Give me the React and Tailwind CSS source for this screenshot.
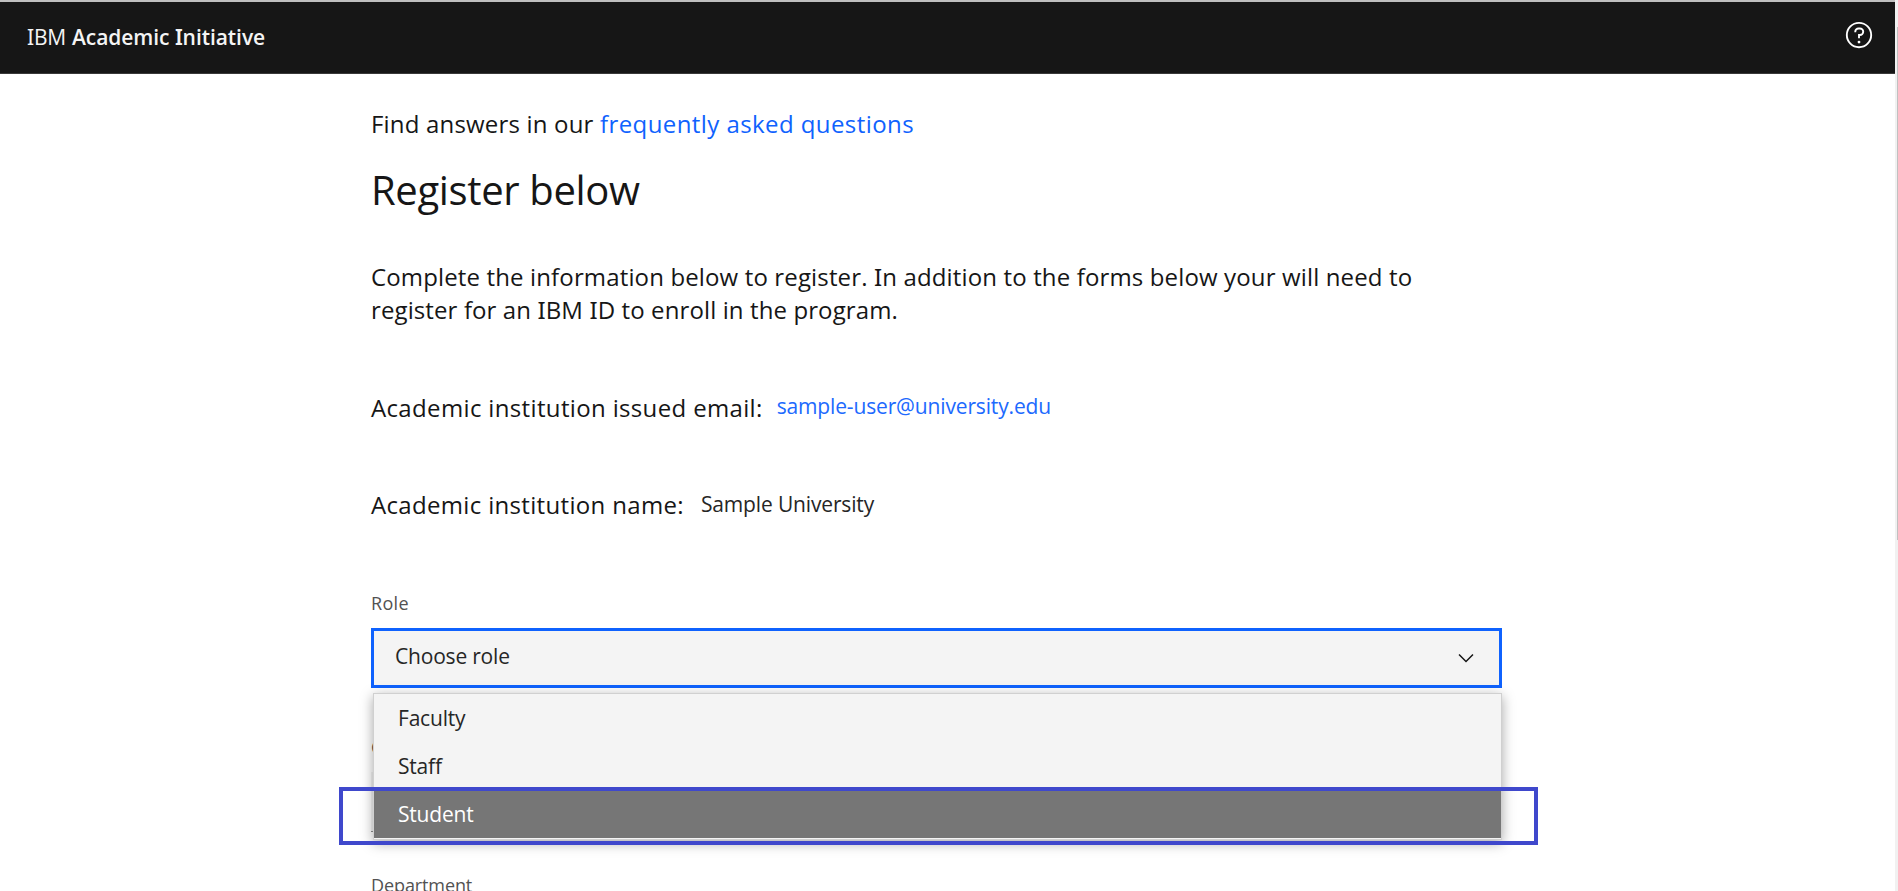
import React from 'react'

function SlabI() {
  return <span className="font-['Noto_Sans']">I</span>
}

function HelpIcon() {
  return (
    <svg viewBox="0 0 32 32" className="size-[30px] fill-white">
      <path d="M16 2a14 14 0 1 0 14 14A14 14 0 0 0 16 2Zm0 26a12 12 0 1 1 12-12A12 12 0 0 1 16 28Z" />
      <circle cx="16" cy="23.5" r="1.5" />
      <path d="M17 8h-1.5A4.49 4.49 0 0 0 11 12.5V13h2v-.5A2.5 2.5 0 0 1 15.5 10H17a2.5 2.5 0 0 1 0 5h-2v4.5h2V17a4.5 4.5 0 0 0 0-9Z" />
    </svg>
  )
}

function Chevron() {
  return (
    <svg viewBox="0 0 16 16" className="size-6 fill-[#161616]">
      <path d="M8 11 3 6l.7-.7L8 9.6l4.3-4.3.7.7Z" />
    </svg>
  )
}

function RoleMenu() {
  return (
    <ul className="absolute top-[65px] left-[2px] z-10 h-[147px] w-[1129px] border border-[#d0d0d0] bg-[#f4f4f4] text-[21px] tracking-[-0.2px] text-[#262626] shadow-[0_3px_12px_rgba(0,0,0,0.35)]">
      <li className="flex h-12 items-center pl-6">Faculty</li>
      <li className="flex h-12 items-center pl-6">Staff</li>
      <li className="flex h-12 items-center bg-[#767676] pl-6 text-white">Student</li>
    </ul>
  )
}

export default function App() {
  return (
    <div className="flex h-[891px] w-full overflow-hidden bg-white font-['Open_Sans','Noto_Sans',sans-serif] text-[#161616]">
      <div className="flex min-w-0 flex-1 flex-col border-t-2 border-[#bfbfbf]">
        <header className="flex h-[72px] shrink-0 items-center justify-between border-b border-[#393939] bg-[#161616] pr-[21px] pl-[27px] text-[21px] text-[#f4f4f4]">
          <div className="flex gap-1.5">
            <span className="tracking-[-0.2px]"><SlabI />BM</span>
            <span className="font-semibold tracking-[-0.06px]">Academic <SlabI />nitiative</span>
          </div>
          <div className="pb-[5px]"><HelpIcon /></div>
        </header>

        <main className="ml-[371px] flex w-[1131px] flex-col pt-[33px] text-2xl leading-[33px]">
          <p className="whitespace-pre">
            <span className="tracking-[0.18px]">Find answers in our </span>
            <a className="tracking-[0.42px] text-[#0f62fe]">frequently asked questions</a>
          </p>
          <h1 className="mt-[25px] text-[40px] leading-[50px] tracking-[-0.35px]">Register below</h1>
          <p className="mt-[45px] whitespace-nowrap tracking-[0.14px]">
            Complete the information below to register. <SlabI />n addition to the forms below your will need to
            <br />
            <span className="tracking-[0.11px]">register for an <SlabI />BM <SlabI />D to enroll in the program.</span>
          </p>
          <div className="mt-[65px] flex">
            <span className="tracking-[0.35px]">Academic institution issued email:</span>
            <span className="ml-[14px] -mt-px mb-px text-[21px] font-medium tracking-[-0.15px] text-[#2069fe]">sample-user@university.edu</span>
          </div>
          <div className="mt-16 flex">
            <span className="tracking-[0.33px]">Academic institution name:</span>
            <span className="ml-[17px] text-[21px] tracking-[-0.15px] text-[#262626]">Sample University</span>
          </div>

          <label className="mt-[70px] text-lg leading-6 tracking-[0.3px] text-[#525252]">Role</label>
          <div className="relative mt-[13px]">
            <div className="flex h-[60px] items-center justify-between border-3 border-[#0f62fe] bg-[#f4f4f4] px-[21px] text-[21px]">
              <span className="pb-[3px] tracking-[-0.2px] text-[#262626]">Choose role</span>
              <Chevron />
            </div>
            <RoleMenu />
            <div className="absolute top-[159px] left-[-32px] z-20 h-[58px] w-[1199px] border-4 border-[#3f48cc]" />
          </div>

          <label className="mt-[47px] h-6 text-lg leading-6 text-[#525252]">C</label>
          <div className="mt-[13px] h-[60px] shrink-0 border-b border-[#8d8d8d] bg-[#f4f4f4]" />
          <label className="mt-[41px] text-lg leading-6 tracking-[-0.1px] text-[#525252]">Department</label>
        </main>
      </div>
      <div className="flex w-[3px] shrink-0 flex-col bg-[#f1f1f1] pt-[27px]">
        <div className="ml-auto h-[513px] w-px bg-[#c1c1c1]" />
      </div>
    </div>
  )
}
